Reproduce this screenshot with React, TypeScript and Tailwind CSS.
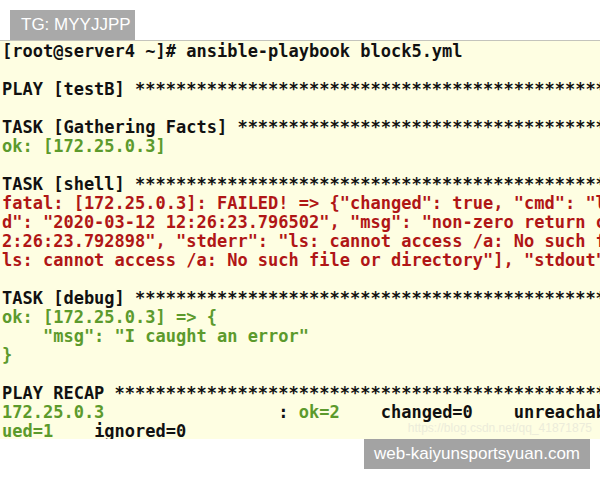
import React from 'react';

type Seg = { t: string; c?: 'g' | 'r' };

const stars = '*'.repeat(80);

const lines: Seg[][] = [
  [{ t: '[root@server4 ~]# ansible-playbook block5.yml' }],
  [],
  [{ t: 'PLAY [testB] ' + stars }],
  [],
  [{ t: 'TASK [Gathering Facts] ' + stars }],
  [{ t: 'ok: [172.25.0.3]', c: 'g' }],
  [],
  [{ t: 'TASK [shell] ' + stars }],
  [{ t: 'fatal: [172.25.0.3]: FAILED! => {"changed": true, "cmd": "ls /a", "delta"', c: 'r' }],
  [{ t: 'd": "2020-03-12 12:26:23.796502", "msg": "non-zero return code", "rc": 2', c: 'r' }],
  [{ t: '2:26:23.792898", "stderr": "ls: cannot access /a: No such file or directory"', c: 'r' }],
  [{ t: 'ls: cannot access /a: No such file or directory"], "stdout": "", "stdout_lines"', c: 'r' }],
  [],
  [{ t: 'TASK [debug] ' + stars }],
  [{ t: 'ok: [172.25.0.3] => {', c: 'g' }],
  [{ t: '    "msg": "I caught an error"', c: 'g' }],
  [{ t: '}', c: 'g' }],
  [],
  [{ t: 'PLAY RECAP ' + stars }],
  [
    { t: '172.25.0.3', c: 'g' },
    { t: '                 : ' },
    { t: 'ok=2', c: 'g' },
    { t: '    changed=0    unreachable=0    failed=0    skipped=0    resc' },
  ],
  [{ t: 'ued=1', c: 'g' }, { t: '    ignored=0' }],
];

const color = (c?: 'g' | 'r') =>
  c === 'g' ? 'text-[#5c9a2c]' : c === 'r' ? 'text-[#b01616]' : 'text-[#111111]';

export default function App() {
  return (
    <div className="w-[600px] h-[480px] bg-white overflow-hidden">
      <div className="pt-[10px] pl-[10px]">
        <div className="w-[125px] h-[30px] bg-[#a9a9a9] text-white text-[17px] leading-[30px] pl-[11px] font-['Liberation_Sans',sans-serif]">
          TG: MYYJJPP
        </div>
      </div>
      <div className="relative h-[399px] bg-[#fefee2] border-t border-[#c4c4bc] overflow-hidden pl-[2px] pt-[1px] font-['DejaVu_Sans_Mono',monospace] font-bold text-[17px] leading-[19px]">
        {lines.map((segs, i) => (
          <div key={i} className="h-[19px] whitespace-pre">
            {segs.map((s, j) => (
              <span key={j} className={color(s.c)}>
                {s.t}
              </span>
            ))}
          </div>
        ))}
        <div className="absolute right-[8px] top-[378px] text-[12px] text-[#ececda] font-['Liberation_Sans',sans-serif] font-normal">
          https://blog.csdn.net/qq_41871875
        </div>
      </div>
      <div className="flex justify-end pr-[10px]">
        <div className="h-[30px] bg-[#a3a3a3] text-white text-[17px] leading-[30px] px-[10px] font-['Liberation_Sans',sans-serif]">
          web-kaiyunsportsyuan.com
        </div>
      </div>
    </div>
  );
}
